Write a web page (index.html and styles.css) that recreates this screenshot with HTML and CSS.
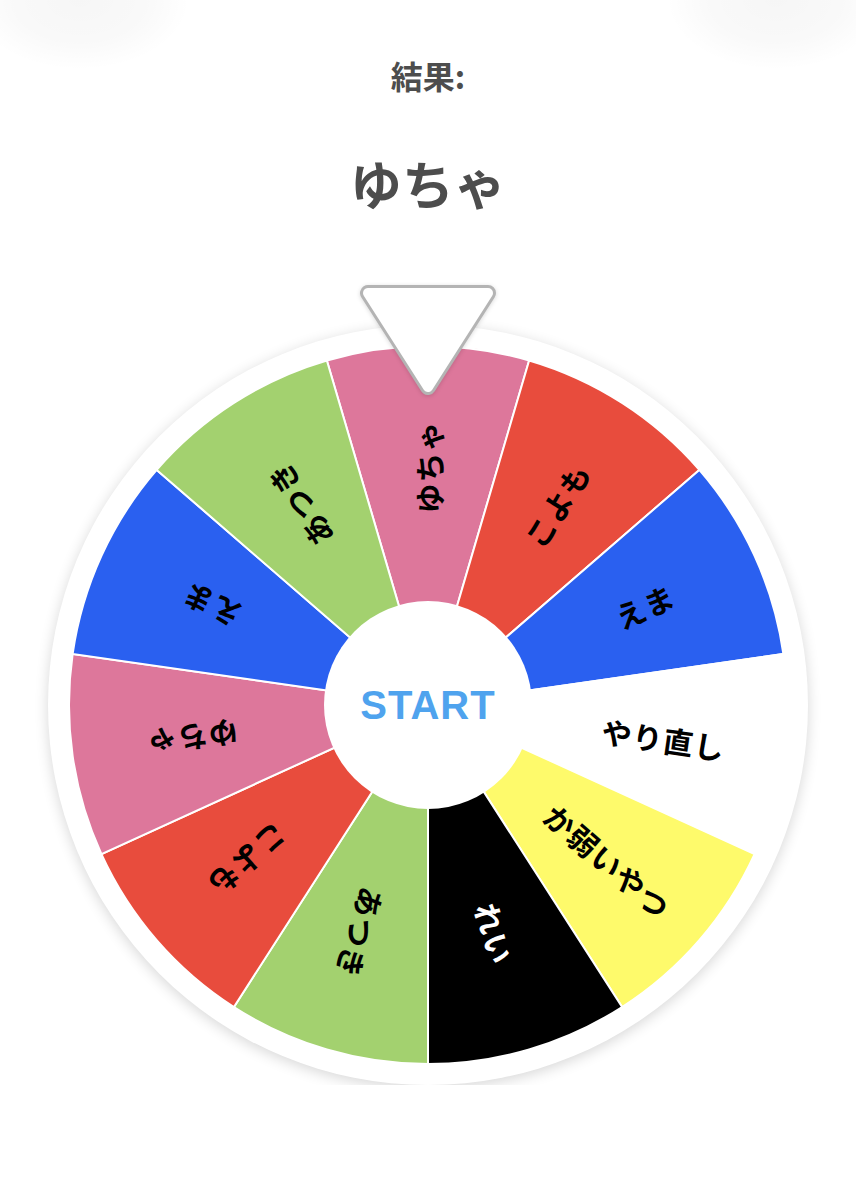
FILE: index.html
```html
<!DOCTYPE html>
<html lang="ja">
<head>
    <meta charset="UTF-8">
    <meta name="viewport" content="width=device-width, initial-scale=1.0">
    <link rel="stylesheet" href="styles.css">
</head>
<body>

	<!-- 上のボタンの影 -->
	<div class="corner corner-left"></div>
	<div class="corner corner-right"></div>

	<main class="page">
		<p class="result-label">結果:</p>
		<p class="result-name">ゆちゃ</p>

		<div class="wheel">
			<svg class="wheel-svg" id="wheel" viewBox="-380 -380 760 760" width="760" height="760"></svg>

			<!-- 針 -->
			<svg class="pointer" viewBox="0 0 140 116" width="140" height="116">
				<polygon points="10,10 130,10 70,104" fill="#b4b4b4" stroke="#b4b4b4" stroke-width="16" stroke-linejoin="round"/>
				<polygon points="10,10 130,10 70,104" fill="#fff" stroke="#fff" stroke-width="10" stroke-linejoin="round"/>
			</svg>
		</div>
	</main>

	<script>
	// ルーレットの項目
	const items = [
		{ name: 'ゆちゃ', color: '#dd779b' },
		{ name: 'こよも', color: '#e84c3d' },
		{ name: 'えま', color: '#2a60f0' },
		{ name: 'やり直し', color: '#ffffff' },
		{ name: 'か弱いやつ', color: '#fefa6b' },
		{ name: 'れい', color: '#000000', text: '#ffffff' },
		{ name: 'あつき', color: '#a3d16f' },
		{ name: 'こよも', color: '#e84c3d' },
		{ name: 'ゆちゃ', color: '#dd779b' },
		{ name: 'えま', color: '#2a60f0' },
		{ name: 'あつき', color: '#a3d16f' }
	];

	const svg = document.getElementById('wheel');
	const ns = 'http://www.w3.org/2000/svg';
	const R = 359;
	const step = 360 / items.length;

	function point(deg, r) {
		const rad = deg * Math.PI / 180;
		return (r * Math.sin(rad)).toFixed(2) + ' ' + (-r * Math.cos(rad)).toFixed(2);
	}

	items.forEach(function (item, i) {
		const mid = i * step;
		const a1 = mid - step / 2;
		const a2 = mid + step / 2;

		const path = document.createElementNS(ns, 'path');
		path.setAttribute('d', 'M0 0 L' + point(a1, R) + ' A' + R + ' ' + R + ' 0 0 1 ' + point(a2, R) + ' Z');
		path.setAttribute('fill', item.color);
		path.setAttribute('class', 'segment');
		svg.appendChild(path);

		const text = document.createElementNS(ns, 'text');
		text.setAttribute('transform', 'rotate(' + (mid - 90) + ') translate(238 0)');
		text.setAttribute('class', 'segment-text');
		text.setAttribute('fill', item.text || '#000');
		text.textContent = item.name;
		svg.appendChild(text);
	});

	// 真ん中のスタート
	const hub = document.createElementNS(ns, 'circle');
	hub.setAttribute('r', 104);
	hub.setAttribute('fill', '#fff');
	svg.appendChild(hub);

	const start = document.createElementNS(ns, 'text');
	start.setAttribute('class', 'start-text');
	start.textContent = 'START';
	svg.appendChild(start);
	</script>

</body>
</html>
```

FILE: styles.css
```css
/* 全体 */
body {margin: 0; background: #fff; font-family: "Noto Sans CJK JP", "Noto Sans", sans-serif; overflow: hidden;}
.page {display: flex; flex-direction: column; align-items: center;}

/* 上の影 (ぼかし) */
.corner {position: absolute; top: -70px; width: 220px; height: 140px; border-radius: 50%; background: radial-gradient(closest-side, rgba(0,0,0,0.035), rgba(0,0,0,0.025) 60%, rgba(0,0,0,0) 100%);}
.corner-left {left: -30px;}
.corner-right {right: -30px;}

/* 結果 */
.result-label {margin: 55px 0 0; font-size: 32px; line-height: 40px; font-weight: 700; color: #4d4d4d;}
.result-name {margin: 58px 0 0; font-size: 52px; line-height: 60px; font-weight: 700; color: #4d4d4d;}

/* ルーレット */
.wheel {position: relative; width: 760px; height: 760px; margin-top: 112px; border-radius: 50%; background: #fff; box-shadow: 0 3px 14px rgba(0,0,0,0.16);}
.wheel-svg {display: block;}
.wheel .segment {stroke: #fff; stroke-width: 2;}
.wheel .segment-text {font-size: 30px; font-weight: 700; text-anchor: middle; dominant-baseline: central; letter-spacing: 1px;}
.wheel .start-text {font-family: "Liberation Sans", Arial, sans-serif; font-size: 40px; font-weight: 700; fill: #4fa3ee; text-anchor: middle; dominant-baseline: central; letter-spacing: 1px;}

/* 針 */
.pointer {position: absolute; top: -42px; left: 310px; filter: drop-shadow(0 1px 2px rgba(0,0,0,0.15));}
```
